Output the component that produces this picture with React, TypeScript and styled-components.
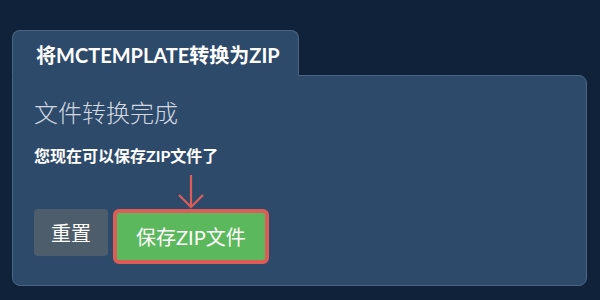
import React from "react";
import styled, { createGlobalStyle } from "styled-components";

const Global = createGlobalStyle`
  html, body { margin: 0; padding: 0; background: #10223a; }
  body { font-family: "Lato", "Noto Sans CJK SC", sans-serif; color: #ffffff; }
`;

const Page = styled.div`
  width: 600px;
  height: 300px;
  box-sizing: border-box;
  padding: 30px 13px 0 12px;
  background: #10223a;
`;

const TabBar = styled.div`
  display: flex;
`;

const Tab = styled.div`
  position: relative;
  z-index: 1;
  margin-bottom: -1px;
  width: 287px;
  height: 46px;
  box-sizing: border-box;
  padding: 12px 0 0 23px;
  background: #2e4a6a;
  border: 1px solid #4a6483;
  border-bottom-color: #2e4a6a;
  border-radius: 8px 8px 0 0;
  font-size: 20px;
  font-weight: 700;
  line-height: 24px;
  color: #ffffff;
`;

const Panel = styled.div`
  height: 211px;
  box-sizing: border-box;
  padding: 22px 21px 0 21px;
  background: #2e4a6a;
  border: 1px solid #4a6483;
  border-radius: 0 8px 8px 8px;
`;

const Heading = styled.h3`
  margin: 0;
  font-size: 24px;
  font-weight: 300;
  line-height: 30px;
  color: #d2d9e1;
`;

const Message = styled.p`
  margin: 18px 0 0 0;
  font-size: 16px;
  font-weight: 700;
  line-height: 20px;
  color: #ffffff;
`;

const ButtonRow = styled.div`
  display: flex;
  align-items: flex-start;
  gap: 5px;
  margin-top: 43px;
`;

const Button = styled.button<{ $variant: "default" | "success"; $highlight?: boolean }>`
  position: relative;
  box-sizing: border-box;
  height: ${(p) => (p.$highlight ? 55 : 47)}px;
  padding: 0 ${(p) => (p.$highlight ? 19 : 17)}px;
  font-family: inherit;
  font-size: 20px;
  font-weight: 400;
  line-height: 24px;
  color: #ffffff;
  background: ${(p) => (p.$variant === "success" ? "#5cb85c" : "#4e5d6c")};
  border: ${(p) => (p.$highlight ? "4px solid #dc5d58" : "none")};
  border-radius: ${(p) => (p.$highlight ? 6 : 4)}px;
  cursor: pointer;
`;

const Arrow = styled.svg`
  position: absolute;
  left: 50%;
  bottom: 100%;
  margin-left: -14px;
  margin-bottom: 4px;
  overflow: visible;
`;

export default function App() {
  return (
    <>
      <Global />
      <Page>
        <TabBar>
          <Tab>将MCTEMPLATE转换为ZIP</Tab>
        </TabBar>
        <Panel>
          <Heading>文件转换完成</Heading>
          <Message>您现在可以保存ZIP文件了</Message>
          <ButtonRow>
            <Button $variant="default">重置</Button>
            <Button $variant="success" $highlight>
              保存ZIP文件
              <Arrow width="28" height="34" viewBox="0 0 28 34">
                <line x1="14" y1="0" x2="14" y2="32" stroke="#dc5d58" strokeWidth="2.2" />
                <polyline points="2,20 14,32 26,20" fill="none" stroke="#dc5d58" strokeWidth="2.2" />
              </Arrow>
            </Button>
          </ButtonRow>
        </Panel>
      </Page>
    </>
  );
}
